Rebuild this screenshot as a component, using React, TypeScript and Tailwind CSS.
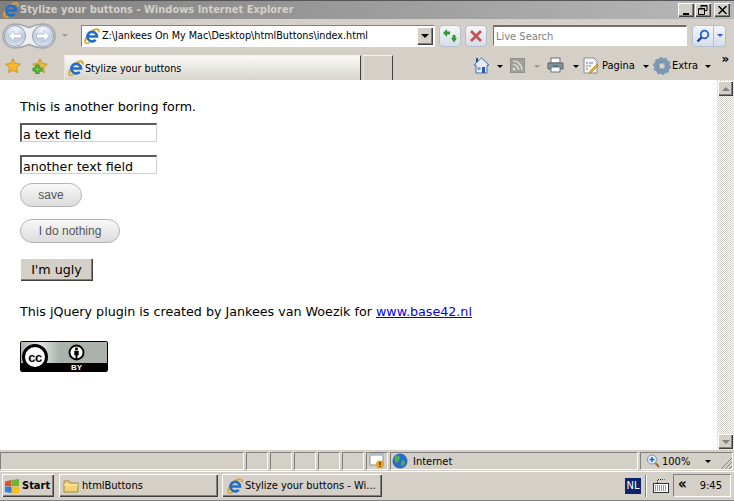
import React from "react";

const bevelOut = "shadow-[inset_1px_1px_0_#fff,inset_-1px_-1px_0_#404040,inset_-2px_-2px_0_#808080]";
const ui = "font-['DejaVu_Sans_Condensed','DejaVu_Sans',sans-serif]";

function IE({ size = 16 }: { size?: number }) {
  return (
    <svg width={size} height={size} viewBox="0 0 16 16" className="shrink-0" fill="none">
      <path d="M1.500 14.800C0 11.500 4.500 4 10 1.800c3-1.200 5.400-.6 4.800 2.600" stroke="#e3a51f" strokeWidth="1.900" />
      <path d="M1.500 14.800c1 .9 2.800.3 4-.5" stroke="#e3a51f" strokeWidth="1.500" />
      <path d="M3.400 8.500h9.600a4.800 4.800 0 1 0-1.300 3.400" stroke="#1f6fcc" strokeWidth="2.700" />
    </svg>
  );
}

function Arrow({ className = "" }: { className?: string }) {
  return <span className={`w-0 h-0 border-x-[3px] border-x-transparent border-t-[3px] border-t-black ${className}`} />;
}

function NavPill() {
  return (
    <svg width="54" height="26" viewBox="0 0 54 26">
      <defs>
        <radialGradient id="navg" cx="50%" cy="22%" r="85%">
          <stop offset="0%" stopColor="#f6f8fc" />
          <stop offset="60%" stopColor="#bfcde3" />
          <stop offset="100%" stopColor="#e6edf7" />
        </radialGradient>
      </defs>
      <path d="M13 1c5 0 9 1.500 14 3.500C32 2.500 36 1 41 1a12 12 0 0 1 0 24c-5 0-9-1.500-14-3.500C22 23.500 18 25 13 25A12 12 0 0 1 13 1Z" fill="#eef0f0" stroke="#a2a6ac" strokeWidth="1.500" />
      <circle cx="13" cy="13" r="10.500" fill="url(#navg)" stroke="#9aa0aa" />
      <circle cx="41" cy="13" r="10.500" fill="url(#navg)" stroke="#9aa0aa" />
      <path d="M6.500 13 12 7.500V11h7.500v4H12v3.500Z" fill="#fff" stroke="#a0aec2" strokeWidth=".7" />
      <path d="M47.500 13 42 7.500V11h-7.500v4H42v3.500Z" fill="#fff" stroke="#a0aec2" strokeWidth=".7" />
    </svg>
  );
}

function Star({ plus = false }: { plus?: boolean }) {
  return (
    <svg width="16" height="16" viewBox="0 0 16 16">
      <path d="M8 .8l2.200 4.700 5.100.6-3.800 3.500 1 5.100L8 12.200 3.500 14.700l1-5.100L.7 6.100l5.100-.6Z" fill={plus ? "#e8b84a" : "#f8b62c"} stroke="#c88a12" strokeWidth=".8" />
      {plus && <path d="M1 10h3V7h3v3h3v3H7v3H4v-3H1Z" fill="#62c840" stroke="#2a7a1a" strokeWidth=".8" />}
    </svg>
  );
}

function ToolBtn({ children }: { children: React.ReactNode }) {
  return (
    <div className="w-[22px] h-[22px] rounded-[4px] border border-[#b6c0cc] bg-gradient-to-b from-[#f4f6f9] to-[#d6dde8] flex items-center justify-center">
      {children}
    </div>
  );
}

function StatusCell({ className = "", children }: { className?: string; children?: React.ReactNode }) {
  return (
    <div className={`h-[18px] border border-t-[#808080] border-l-[#808080] border-r-white border-b-white flex items-center ${className}`}>
      {children}
    </div>
  );
}

function TaskBtn({ w, children }: { w: string; children: React.ReactNode }) {
  return <div className={`${w} h-[23px] flex items-center ${bevelOut}`}>{children}</div>;
}

const inputCls = "w-[137px] h-[19px] pl-[1px] border-t-2 border-l-2 border-r border-b border-t-[#5a5a5a] border-l-[#5a5a5a] border-r-[#d4d0c8] border-b-[#d4d0c8] leading-[19px] whitespace-nowrap";
const pillCls = "h-[24px] rounded-full border border-[#b4b4b4] bg-gradient-to-b from-[#f8f8f8] to-[#dcdcdc] font-['Liberation_Sans',sans-serif] text-[12px] text-[#555] flex items-center justify-center";

function Content() {
  return (
    <div className="flex-1 pl-5 pt-[18px] font-['DejaVu_Sans',sans-serif] text-[12.7px] leading-[18px] text-black flex flex-col items-start">
      <p>This is another boring form.</p>
      <div className={`mt-[7px] ${inputCls}`}>a text field</div>
      <div className={`mt-[13px] ${inputCls}`}>another text field</div>
      <div className={`mt-[9px] w-[62px] ${pillCls}`}>save</div>
      <div className={`mt-[12px] w-[100px] ${pillCls}`}>I do nothing</div>
      <div className={`mt-[15px] w-[73px] h-[23px] bg-[#d4d0c8] flex items-center justify-center ${bevelOut}`}>I'm ugly</div>
      <p className="mt-[22px]">
        This jQuery plugin is created by Jankees van Woezik for <span className="text-[#0000ee] underline">www.base42.nl</span>
      </p>
      <div className="mt-[20px] w-[88px] h-[31px] rounded-[2px] border border-black bg-[#aab2ab] flex flex-col overflow-hidden relative">
        <div className="h-[21px] shrink-0 relative bg-gradient-to-r from-[#aab2ab] via-[#e4e6e3] via-[22%] to-[#aab2ab] to-[45%]">
          <span className="absolute left-[47px] top-[2px]">
            <svg width="17" height="17" viewBox="0 0 17 17">
              <circle cx="8.500" cy="8.500" r="7" fill="#fff" stroke="#000" strokeWidth="1.800" />
              <circle cx="8.500" cy="4.800" r="1.500" fill="#000" />
              <path d="M6.300 6.800h4.400v4.400H9.500v4H7.500v-4H6.300Z" fill="#000" />
            </svg>
          </span>
        </div>
        <div className="flex-1 bg-black flex justify-end pr-[25px]">
          <span className="font-['Liberation_Sans',sans-serif] text-[8px] leading-[9px] font-bold text-white">BY</span>
        </div>
        <span className="absolute left-[1px] top-[2px] w-[26px] h-[26px] rounded-full bg-white border-[3px] border-black flex items-center justify-center font-['Liberation_Sans',sans-serif] font-bold text-[13px] leading-none tracking-[-0.5px]">cc</span>
      </div>
    </div>
  );
}

export default function App() {
  return (
    <div className={`w-[734px] h-[501px] overflow-hidden bg-[#d4d0c8] flex flex-col text-black ${ui}`}>
      {/* title bar */}
      <div className="h-[19px] shrink-0 border-t border-t-[#555] bg-gradient-to-r from-[#808080] to-[#b8b8b8] flex items-center pl-[3px] pr-[4px]">
        <IE />
        <span className="ml-[1px] text-[11px] font-bold text-[#d4d0c8] whitespace-nowrap">Stylize your buttons - Windows Internet Explorer</span>
        <div className="ml-auto flex gap-[1px]">
          <div className={`w-4 h-[14px] bg-[#d4d0c8] flex items-end justify-center pb-[2px] ${bevelOut}`}><span className="w-[6px] h-[2px] bg-black" /></div>
          <div className={`w-4 h-[14px] bg-[#d4d0c8] flex items-center justify-center ${bevelOut}`}>
            <svg width="10" height="10" viewBox="0 0 10 10" fill="none" stroke="#000"><path d="M3 2.500V.5h6v5H7M.5 3.500h6v6h-6Z" /><path d="M3 1h6M1 4h6" strokeWidth="1.200" /></svg>
          </div>
          <div className={`ml-[2px] w-4 h-[14px] bg-[#d4d0c8] flex items-center justify-center ${bevelOut}`}>
            <svg width="9" height="8" viewBox="0 0 9 8" stroke="#000" strokeWidth="1.500"><path d="M.5 0l8 8M8.500 0l-8 8" /></svg>
          </div>
        </div>
      </div>

      {/* nav bar */}
      <div className="h-[33px] shrink-0 flex items-center pl-[2px]">
        <NavPill />
        <Arrow className="ml-[6px] !border-t-[#999]" />
        <div className="ml-[13px] w-[354px] h-[22px] bg-white border border-t-[#808080] border-l-[#808080] border-r-white border-b-white flex items-center pl-[2px] pr-[1px]">
          <IE />
          <span className="ml-[2px] pt-[2px] text-[10.7px] whitespace-nowrap">Z:\Jankees On My Mac\Desktop\htmlButtons\index.html</span>
          <div className={`ml-auto w-[16px] h-[18px] bg-[#d4d0c8] flex items-center justify-center ${bevelOut}`}><Arrow className="!border-x-[4px] !border-t-[4px]" /></div>
        </div>
        <div className="ml-[4px]">
          <ToolBtn>
            <svg width="16" height="14" viewBox="0 0 16 14" fill="#2f9a2f"><path d="M1 4l4-4v2.500h3v3H5V8ZM15 9l-3 4.500L9 9h1.500V6h3v3Z" /></svg>
          </ToolBtn>
        </div>
        <div className="ml-[4px]">
          <ToolBtn>
            <svg width="12" height="12" viewBox="0 0 12 12" stroke="#c8504e" strokeWidth="2.600"><path d="M1 1l10 10M11 1 1 11" /></svg>
          </ToolBtn>
        </div>
        <div className="ml-[6px] w-[194px] h-[21px] bg-white border border-t-2 border-t-[#707070] border-l-[#707070] border-r-white border-b-white flex items-center pl-[2px]">
          <span className="pt-[2px] text-[11px] text-[#808080]">Live Search</span>
        </div>
        <div className="ml-[5px] w-[34px] h-[22px] rounded-[4px] border border-[#b6c0cc] bg-gradient-to-b from-[#f4f6f9] to-[#d6dde8] flex items-center">
          <div className="w-[21px] h-full border-r border-r-[#b6c0cc] flex items-center justify-center">
            <svg width="14" height="14" viewBox="0 0 14 14" fill="none"><circle cx="8.500" cy="5.500" r="3.800" stroke="#2060d8" strokeWidth="1.800" /><path d="M5.500 8.500 1.500 12.500" stroke="#1a40b0" strokeWidth="2.400" /></svg>
          </div>
          <Arrow className="ml-[3px] !border-t-[#2060d8]" />
        </div>
      </div>

      {/* tab row */}
      <div className="h-[28px] shrink-0 flex pl-[5px] relative">
        <div className="flex items-start pt-[6px] gap-[11px]">
          <Star />
          <Star plus />
        </div>
        <div className="ml-[16px] mt-[3px] w-[297px] h-[25px] border border-b-0 border-r-[#404040] border-l-[#e8e6e0] border-t-[#f4f4f0] bg-gradient-to-b from-[#faf9f6] to-[#d8d5cd] flex items-center pl-[3px]">
          <IE />
          <span className="ml-[1px] pt-[2px] text-[10.7px] whitespace-nowrap">Stylize your buttons</span>
        </div>
        <div className="ml-[2px] mt-[3px] w-[30px] h-[25px] border border-b-0 border-r-[#404040] border-l-[#e8e6e0] border-t-[#f4f4f0]" />
        <div className="ml-[80px] flex items-start pt-[5px]">
          <svg width="17" height="17" viewBox="0 0 17 17">
            <path d="M8.500 1 16 8h-2v8H3V8H1Z" fill="#e6ecf5" stroke="#4a6ea8" />
            <path d="M9 10h3v6H9Z" fill="#2a5aa8" /><path d="M4.500 10h3v3h-3Z" fill="#7aa0d8" /><path d="M3 1h2v3L3 6Z" fill="#2a4ea8" />
          </svg>
          <Arrow className="ml-[7px] mt-[8px]" />
          <svg width="15" height="15" viewBox="0 0 15 15" className="ml-[7px] mt-[1px]">
            <rect width="15" height="15" rx="2" fill="#a0a09a" stroke="#84847e" />
            <circle cx="4" cy="11" r="1.500" fill="#d8d8d4" />
            <path d="M3 6.500a5.500 5.500 0 0 1 5.500 5.500M3 3a9 9 0 0 1 9 9" fill="none" stroke="#d8d8d4" strokeWidth="1.600" />
          </svg>
          <Arrow className="ml-[9px] mt-[8px] !border-t-[#999]" />
          <svg width="17" height="16" viewBox="0 0 17 16" className="ml-[7px]">
            <rect x="4" y="1" width="9" height="5" fill="#fff" stroke="#707070" />
            <path d="M1 6h15v6H1Z" fill="#8a929c" stroke="#5a626c" />
            <rect x="4" y="10" width="9" height="5" fill="#fff" stroke="#707070" />
            <rect x="6" y="8" width="5" height="2" fill="#2a8a9a" />
          </svg>
          <Arrow className="ml-[9px] mt-[8px]" />
          <svg width="16" height="17" viewBox="0 0 16 17" className="ml-[4px]">
            <path d="M1 1h10l3 3v12H1Z" fill="#f6f6f4" stroke="#8a8a8a" />
            <path d="M3 6h2M3 9h2M3 12h2M6 6h4M6 9h2" stroke="#6a7a9a" />
            <path d="M7 14 14 7l1.500 1.500-7 7-2 .5Z" fill="#e8b030" stroke="#8a6a10" strokeWidth=".5" />
          </svg>
          <span className="ml-[3px] mt-[2px] w-[33px] text-[11px] leading-[14px]">Pagina</span>
          <Arrow className="ml-[8px] mt-[8px]" />
          <svg width="18" height="18" viewBox="0 0 18 18" className="ml-[4px]">
            <circle cx="9" cy="9" r="6" fill="none" stroke="#7c98b8" strokeWidth="4" />
            <circle cx="9" cy="9" r="8" fill="none" stroke="#7c98b8" strokeWidth="2" strokeDasharray="2.500 2.500" />
            <circle cx="9" cy="9" r="3.500" fill="#d4d0c8" stroke="#5a7898" />
          </svg>
          <span className="ml-[1px] mt-[2px] w-[27px] text-[11px] leading-[14px]">Extra</span>
          <Arrow className="ml-[6px] mt-[8px]" />
        </div>
        <span className="absolute right-[5px] top-[0px] font-bold text-[13px] leading-[14px]">»</span>
      </div>

      {/* page */}
      <div className="h-[370px] shrink-0 bg-white flex">
        <Content />
        <div className="w-[17px] p-[1px] flex flex-col bg-[repeating-conic-gradient(#d4d0c8_0_25%,#fff_0_50%)] bg-[length:2px_2px]">
          <div className={`h-[15px] bg-[#d4d0c8] flex items-center justify-center ${bevelOut}`}>
            <span className="w-0 h-0 border-x-[4px] border-x-transparent border-b-[4px] border-b-[#808080]" />
          </div>
          <div className="flex-1" />
          <div className={`h-[15px] bg-[#d4d0c8] flex items-center justify-center ${bevelOut}`}>
            <Arrow className="!border-x-[4px] !border-t-[4px] !border-t-[#808080]" />
          </div>
        </div>
      </div>

      {/* status bar */}
      <div className="h-[21px] shrink-0 flex items-center gap-[2px] pt-[1px] text-[11px]">
        <StatusCell className="w-[244px]" />
        <StatusCell className="w-[22px]" />
        <StatusCell className="w-[22px]" />
        <StatusCell className="w-[22px]" />
        <StatusCell className="w-[22px]" />
        <StatusCell className="w-[22px]" />
        <StatusCell className="w-[22px] justify-center">
          <svg width="16" height="16" viewBox="0 0 16 16">
            <rect x="1" y="1" width="13" height="11" fill="#fff" stroke="#909090" />
            <path d="M1 1h13v2H1Z" fill="#b8c4d8" />
            <circle cx="11" cy="11.500" r="4" fill="#f0a020" />
            <path d="M11 9v3M11 13v1" stroke="#000" />
          </svg>
        </StatusCell>
        <StatusCell className="w-[248px] pl-[1px]">
          <svg width="16" height="16" viewBox="0 0 16 16">
            <circle cx="8" cy="8" r="7.500" fill="#2a6ac8" />
            <path d="M4 3c2-1 4 0 4 2s-2 2-2 4-2 1-3-1-1-4 1-5ZM10 8c2-1 3 0 3 1s-1 4-3 4-1-4 0-5Z" fill="#50b050" />
          </svg>
          <span className="ml-[5px] pt-[2px]">Internet</span>
        </StatusCell>
        <StatusCell className="w-[93px] pl-[5px] relative">
          <svg width="14" height="14" viewBox="0 0 14 14">
            <circle cx="6" cy="5.500" r="4.500" fill="#e8f0fa" stroke="#7090c0" />
            <path d="M3.500 5.500h5M6 3v5" stroke="#2060c8" strokeWidth="1.600" />
            <path d="M9.500 9 13 13" stroke="#a07030" strokeWidth="2" />
          </svg>
          <span className="ml-[2px] pt-[2px] w-[28px]">100%</span>
          <Arrow className="ml-[15px]" />
          <svg width="12" height="12" viewBox="0 0 12 12" className="absolute right-0 bottom-0" stroke="#808080" fill="none">
            <path d="M1 12 12 1M5 12l7-7M9 12l3-3" />
          </svg>
        </StatusCell>
      </div>

      {/* taskbar */}
      <div className="h-[30px] shrink-0 border-t border-t-white relative flex items-center pl-[2px] text-[11px] pb-[1px] border-b border-b-[#808080]">
        <TaskBtn w="w-[52px]">
          <svg width="16" height="16" viewBox="0 0 16 16" className="ml-[2px]">
            <path d="M1 3.500 7.500 2v6H1Z" fill="#e0502a" />
            <path d="M8 2l7-1v7H8Z" fill="#6ab43a" />
            <path d="M1 8.500h6.500V15L1 14Z" fill="#3a7ad8" />
            <path d="M8 8.500h7V15l-7 .5Z" fill="#f2c020" />
          </svg>
          <span className="ml-[2px] pt-[2px] font-bold">Start</span>
        </TaskBtn>
        <div className="ml-[5px]">
          <TaskBtn w="w-[159px]">
            <svg width="16" height="14" viewBox="0 0 16 14" className="ml-[4px]">
              <path d="M1 2h5l1 2h8v9H1Z" fill="#f3d27a" stroke="#a48a3a" />
              <path d="M1 6h14" stroke="#fff0b8" />
            </svg>
            <span className="ml-[3px] pt-[2px]">htmlButtons</span>
          </TaskBtn>
        </div>
        <div className="ml-[4px]">
          <TaskBtn w="w-[160px]">
            <span className="ml-[5px] flex"><IE /></span>
            <span className="ml-[2px] pt-[2px] whitespace-nowrap">Stylize your buttons - Wi...</span>
          </TaskBtn>
        </div>
        <div className="ml-auto flex items-center">
          <div className="w-[16px] h-[16px] bg-[#0a246a] text-white text-[11px] leading-[16px] text-center">NL</div>
          <div className="ml-[4px] w-[2px] h-[22px] border-l border-l-[#808080] border-r border-r-white" />
          <svg width="16" height="15" viewBox="0 0 16 15" className="ml-[6px]">
            <rect x=".5" y="5.500" width="15" height="9" fill="#fff" stroke="#303030" />
            <path d="M2 8h12M2 10h12M2 12h12" stroke="#303030" strokeDasharray="1 1" />
            <path d="M4.500 5V1.500h7" fill="none" stroke="#303030" strokeDasharray="1 1" />
          </svg>
          <div className="ml-[4px] mr-[3px] w-[58px] h-[23px] border border-t-[#808080] border-l-[#808080] border-r-white border-b-white flex items-center pl-[4px]">
            <span className="font-bold text-[15px] leading-[15px] -mt-[3px]">«</span>
            <span className="ml-[13px] pt-[2px]">9:45</span>
          </div>
        </div>
      </div>
    </div>
  );
}
